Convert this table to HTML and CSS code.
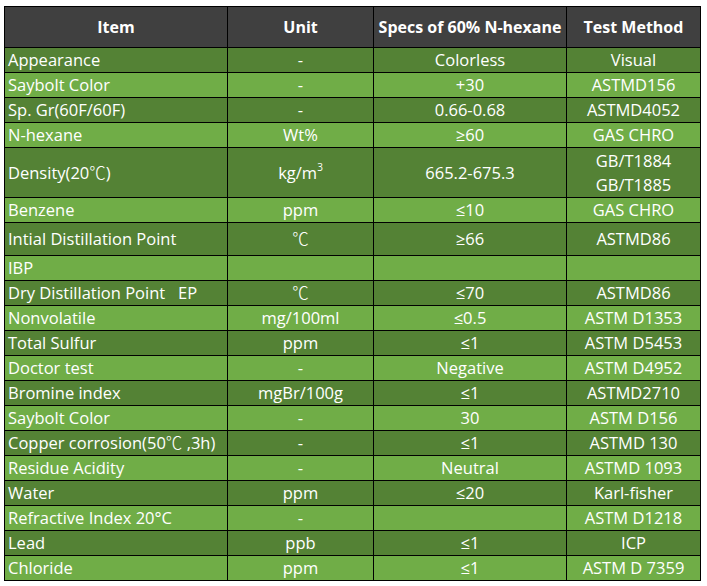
FILE: index.html
```html
<!DOCTYPE html>
<html>
<head>
<meta charset="utf-8">
<link rel="stylesheet" href="styles.css">
</head>
<body>
<table class="spec">
  <colgroup>
    <col class="c-item"><col class="c-unit"><col class="c-spec"><col class="c-method">
  </colgroup>
  <thead>
    <tr><th>Item</th><th>Unit</th><th>Specs of 60% N-hexane</th><th>Test Method</th></tr>
  </thead>
  <tbody>
    <tr><td>Appearance</td><td>-</td><td>Colorless</td><td>Visual</td></tr>
    <tr><td>Saybolt Color</td><td>-</td><td>+30</td><td>ASTMD156</td></tr>
    <tr><td>Sp. Gr(60F/60F)</td><td>-</td><td>0.66-0.68</td><td>ASTMD4052</td></tr>
    <tr><td>N-hexane</td><td>Wt%</td><td>≥60</td><td>GAS CHRO</td></tr>
    <tr class="tall2"><td>Density(20<span class="cjk">℃</span>)</td><td>kg/m<sup>3</sup></td><td>665.2-675.3</td><td>GB/T1884<br>GB/T1885</td></tr>
    <tr><td>Benzene</td><td>ppm</td><td>≤10</td><td>GAS CHRO</td></tr>
    <tr class="tall1"><td>Intial Distillation Point</td><td><span class="cjk">℃</span></td><td>≥66</td><td>ASTMD86</td></tr>
    <tr><td>IBP</td><td></td><td></td><td></td></tr>
    <tr><td>Dry Distillation Point&nbsp;&nbsp;&nbsp;EP</td><td><span class="cjk">℃</span></td><td>≤70</td><td>ASTMD86</td></tr>
    <tr><td>Nonvolatile</td><td>mg/100ml</td><td>≤0.5</td><td>ASTM D1353</td></tr>
    <tr><td>Total Sulfur</td><td>ppm</td><td>≤1</td><td>ASTM D5453</td></tr>
    <tr><td>Doctor test</td><td>-</td><td>Negative</td><td>ASTM D4952</td></tr>
    <tr><td>Bromine index</td><td>mgBr/100g</td><td>≤1</td><td>ASTMD2710</td></tr>
    <tr><td>Saybolt Color</td><td>-</td><td>30</td><td>ASTM D156</td></tr>
    <tr><td>Copper corrosion(50<span class="cjk">℃</span> ,3h)</td><td>-</td><td>≤1</td><td>ASTMD 130</td></tr>
    <tr><td>Residue Acidity</td><td>-</td><td>Neutral</td><td>ASTMD 1093</td></tr>
    <tr><td>Water</td><td>ppm</td><td>≤20</td><td>Karl-fisher</td></tr>
    <tr><td>Refractive Index 20°C</td><td>-</td><td></td><td>ASTM D1218</td></tr>
    <tr><td>Lead</td><td>ppb</td><td>≤1</td><td>ICP</td></tr>
    <tr><td>Chloride</td><td>ppm</td><td>≤1</td><td>ASTM D 7359</td></tr>
  </tbody>
</table>
</body>
</html>
```

FILE: styles.css
```css
html, body {
  margin: 0;
  padding: 0;
  background: #ffffff;
}
body {
  font-family: "Open Sans", "Noto Sans CJK SC", sans-serif;
  font-size: 16px;
  color: #ffffff;
}
.spec {
  margin: 6px 0 0 4px;
  border-collapse: collapse;
  table-layout: fixed;
  width: 697px;
}
.c-item { width: 223px; }
.c-unit { width: 146px; }
.c-spec { width: 193px; }
.c-method { width: 134px; }
.spec th, .spec td {
  border: 1px solid #000000;
  padding: 0 3px;
  text-align: center;
  vertical-align: middle;
  white-space: nowrap;
  line-height: 24px;
  overflow: hidden;
}
.spec th {
  height: 40px;
  background: #404040;
  font-weight: 700;
  font-size: 16px;
}
.spec td {
  height: 24px;
  font-size: 16.5px;
}
.spec td:first-child {
  text-align: left;
}
.spec tbody tr:nth-child(odd) td { background: #548235; }
.spec tbody tr:nth-child(even) td { background: #70ad47; }
.spec tr.tall2 td { height: 49px; }
.spec tr.tall1 td { height: 32px; }
.spec sup {
  font-size: 10px;
  line-height: 0;
  vertical-align: 8px;
}
.cjk {
  font-family: "Noto Sans CJK SC", sans-serif;
  font-weight: 300;
  line-height: 0;
}
```
